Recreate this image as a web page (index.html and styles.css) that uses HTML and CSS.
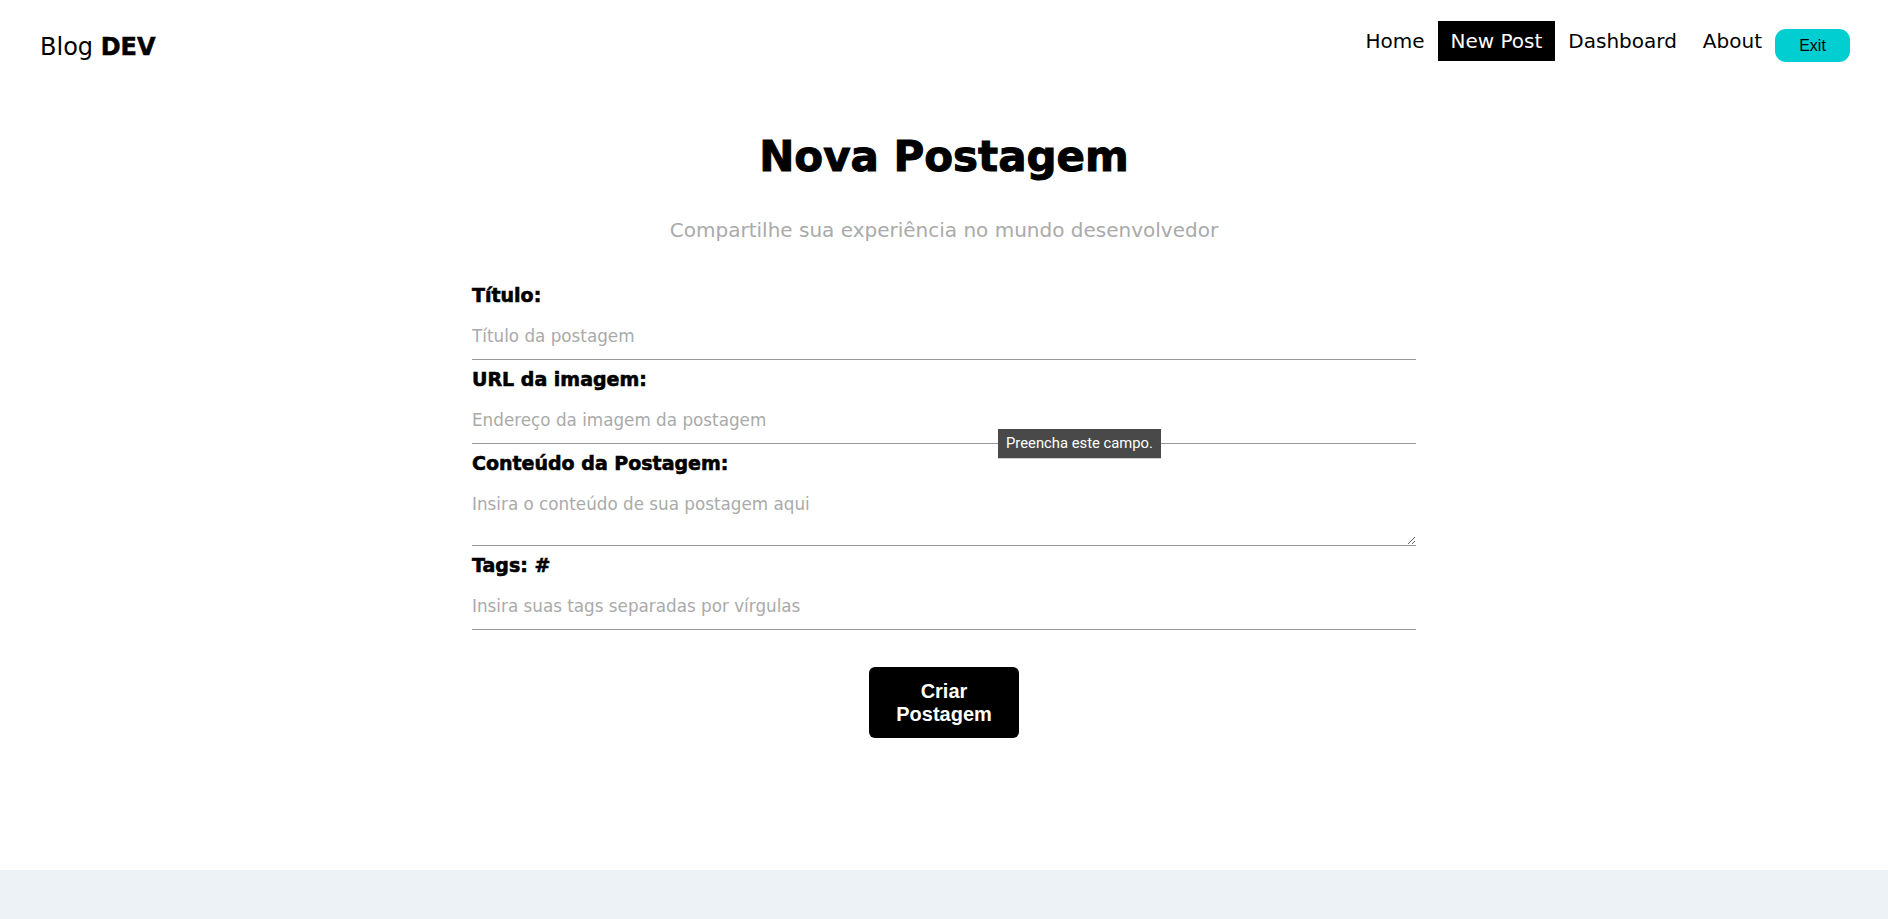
FILE: index.html
```html
<!DOCTYPE html>
<html lang="pt-BR">
<head>
<meta charset="utf-8">
<title>Blog DEV - Nova Postagem</title>
<link rel="stylesheet" href="styles.css">
</head>
<body>
<header class="topbar">
  <a class="brand" href="#">Blog <strong>DEV</strong></a>
  <nav class="menu">
    <a class="menu-link" href="#">Home</a>
    <a class="menu-link active" href="#">New Post</a>
    <a class="menu-link" href="#">Dashboard</a>
    <a class="menu-link" href="#">About</a>
    <button class="exit-btn" type="button">Exit</button>
  </nav>
</header>
<main class="content">
  <h1 class="title">Nova Postagem</h1>
  <p class="subtitle">Compartilhe sua experiência no mundo desenvolvedor</p>
  <form class="post-form">
    <label class="field">
      <span class="field-label">Título:</span>
      <input class="field-input" type="text" placeholder="Título da postagem">
    </label>
    <label class="field field-tip">
      <span class="field-label">URL da imagem:</span>
      <input class="field-input" type="text" placeholder="Endereço da imagem da postagem">
      <span class="tooltip">Preencha este campo.</span>
    </label>
    <label class="field">
      <span class="field-label">Conteúdo da Postagem:</span>
      <textarea class="field-area" placeholder="Insira o conteúdo de sua postagem aqui"></textarea>
    </label>
    <label class="field">
      <span class="field-label">Tags: #</span>
      <input class="field-input" type="text" placeholder="Insira suas tags separadas por vírgulas">
    </label>
    <button class="submit-btn" type="button">Criar Postagem</button>
  </form>
</main>
<footer class="footer"></footer>
</body>
</html>
```

FILE: styles.css
```css
* {
  box-sizing: border-box;
}

html, body {
  margin: 0;
  padding: 0;
}

body {
  font-family: "DejaVu Sans", "Liberation Sans", sans-serif;
  color: #000;
  background: #fff;
  min-height: 100vh;
  display: flex;
  flex-direction: column;
}

.topbar {
  display: flex;
  justify-content: space-between;
  align-items: flex-start;
  padding: 21px 38px 0 40px;
  height: 62px;
}

.brand {
  margin-top: 14px;
  font-size: 24px;
  line-height: 1;
  color: #000;
  text-decoration: none;
}

.brand strong {
  font-weight: bold;
  -webkit-text-stroke: 0.5px #000;
}

.menu {
  display: flex;
  align-items: flex-start;
}

.menu-link {
  display: block;
  padding: 0 13px;
  font-size: 20px;
  line-height: 40px;
  height: 40px;
  color: #000;
  text-decoration: none;
}

.menu-link.active {
  background: #000;
  color: #fff;
}

.exit-btn {
  margin-top: 8px;
  width: 75px;
  height: 33px;
  padding: 0;
  border: 0;
  border-radius: 11px;
  background: #00ced1;
  color: #000;
  font-family: "Liberation Sans", Arial, sans-serif;
  font-size: 16px;
  cursor: pointer;
}

.content {
  flex: 1;
  display: flex;
  flex-direction: column;
  align-items: center;
}

.title {
  margin: 70px 0 0;
  font-size: 42px;
  line-height: 50px;
  font-weight: bold;
  -webkit-text-stroke: 1px #000;
}

.subtitle {
  margin: 36px 0 0;
  font-size: 20px;
  line-height: 24px;
  color: #aaa;
}

.post-form {
  margin-top: 44px;
  width: 944px;
  display: flex;
  flex-direction: column;
  gap: 10px;
}

.field {
  display: flex;
  flex-direction: column;
}

.field-tip {
  position: relative;
}

.field-label {
  font-size: 19px;
  line-height: 19px;
  font-weight: bold;
  -webkit-text-stroke: 0.6px #000;
}

.field-input,
.field-area {
  width: 100%;
  border: 0;
  border-bottom: 1px solid #999;
  outline: none;
  background: transparent;
  font-family: "DejaVu Sans", sans-serif;
  font-size: 16.8px;
  line-height: 20px;
  color: #000;
}

.field-input {
  height: 55px;
  padding: 21px 0 13px;
}

.field-area {
  display: block;
  height: 73px;
  padding: 21px 0 0;
  resize: vertical;
}

.field-input::placeholder,
.field-area::placeholder {
  color: #aaa;
}

.tooltip {
  position: absolute;
  left: 526px;
  top: 59px;
  height: 29px;
  padding: 0 8px;
  background: #494949;
  color: #fff;
  font-family: "Roboto", "Open Sans", sans-serif;
  font-size: 14.8px;
  line-height: 29px;
  white-space: nowrap;
  box-shadow: 0 1px 0 #d0d0d0;
}

.submit-btn {
  align-self: center;
  margin-top: 27px;
  width: 150px;
  height: 71px;
  padding: 0 20px;
  border: 0;
  border-radius: 6px;
  background: #000;
  color: #fff;
  font-family: "Liberation Sans", Arial, sans-serif;
  font-size: 20px;
  font-weight: bold;
  line-height: 23px;
  cursor: pointer;
}

.footer {
  height: 49px;
  background: #edf2f7;
}
```
